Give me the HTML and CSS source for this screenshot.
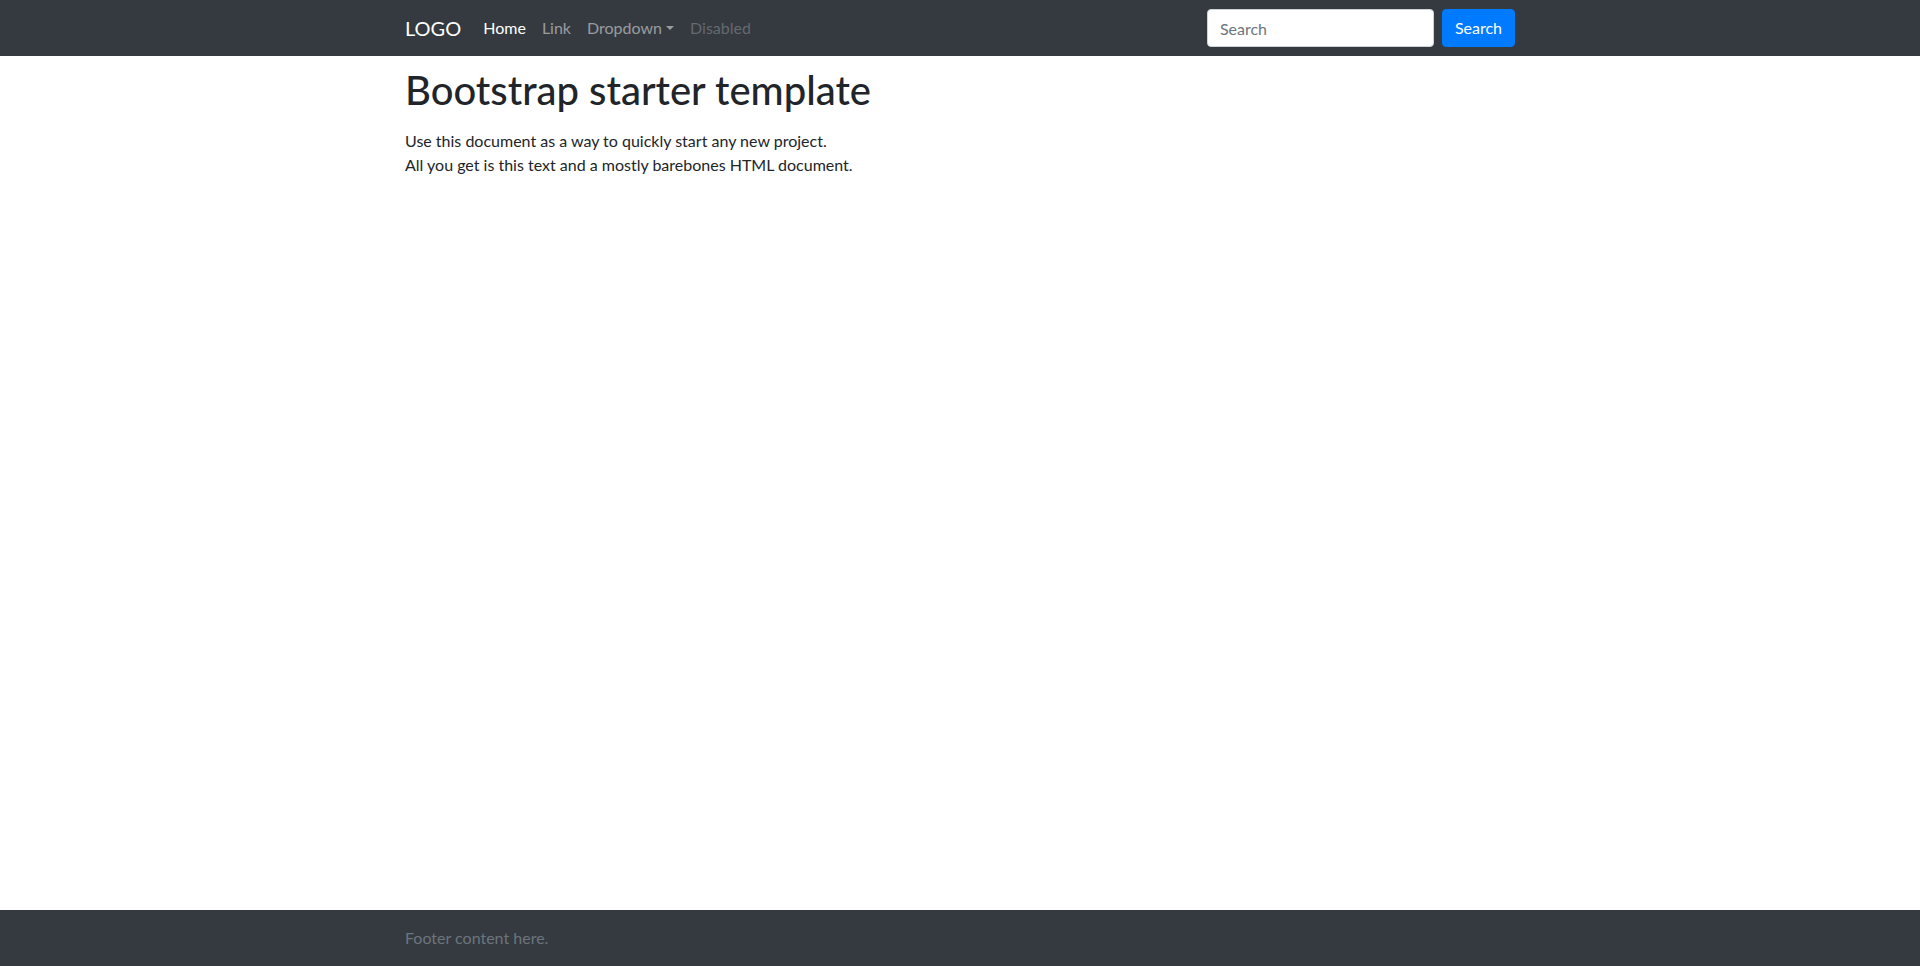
FILE: index.html
```html
<!DOCTYPE html>
<html lang="en">
<head>
<meta charset="utf-8">
<title>Bootstrap starter template</title>
<link rel="stylesheet" href="styles.css">
</head>
<body>
<nav class="navbar">
  <div class="container nav-inner">
    <a class="brand" href="#">LOGO</a>
    <ul class="nav">
      <li><a class="nav-link active" href="#">Home</a></li>
      <li><a class="nav-link" href="#">Link</a></li>
      <li><a class="nav-link dropdown" href="#">Dropdown</a></li>
      <li><a class="nav-link disabled" href="#">Disabled</a></li>
    </ul>
    <form class="search">
      <input class="search-input" type="text" placeholder="Search">
      <button class="search-btn" type="button">Search</button>
    </form>
  </div>
</nav>
<main class="container main">
  <h1 class="title">Bootstrap starter template</h1>
  <p class="text">Use this document as a way to quickly start any new project.<br>All you get is this text and a mostly barebones HTML document.</p>
</main>
<footer class="footer">
  <div class="container">
    <span class="footer-text">Footer content here.</span>
  </div>
</footer>
</body>
</html>
```
FILE: styles.css
```css
* { box-sizing: border-box; }
html, body { height: 100%; }
body {
  margin: 0;
  font-family: Lato, "Noto Sans", sans-serif;
  font-size: 16px;
  line-height: 24px;
  color: #212529;
  background: #fff;
  display: flex;
  flex-direction: column;
  min-height: 100vh;
}
.container {
  width: 1140px;
  margin: 0 auto;
  padding: 0 15px;
}
.navbar {
  background: #343a40;
  height: 56px;
}
.nav-inner {
  display: flex;
  align-items: center;
  height: 56px;
}
.brand {
  color: #fff;
  font-size: 20px;
  line-height: 30px;
  padding: 5px 0;
  margin-right: 14px;
  text-decoration: none;
}
.nav {
  display: flex;
  list-style: none;
  margin: 0;
  padding: 0;
  flex: 1;
}
.nav-link {
  display: block;
  padding: 8px;
  color: rgba(255,255,255,.5);
  text-decoration: none;
}
.nav-link.active { color: #fff; }
.nav-link.disabled { color: rgba(255,255,255,.25); }
.dropdown::after {
  content: "";
  display: inline-block;
  margin-left: .255em;
  vertical-align: .255em;
  border-top: .3em solid;
  border-right: .3em solid transparent;
  border-left: .3em solid transparent;
}
.search {
  display: flex;
  align-items: center;
}
.search-input {
  width: 227px;
  height: 38px;
  padding: 6px 12px;
  font: inherit;
  color: #495057;
  border: 1px solid #ced4da;
  border-radius: 4px;
  margin-right: 8px;
  background: #fff;
}
.search-input::placeholder { color: #6c757d; }
.search-btn {
  height: 38px;
  padding: 6px 12px;
  font: inherit;
  color: #fff;
  background: #007bff;
  border: 1px solid #007bff;
  border-radius: 4px;
}
.main { flex: 1; }
.title {
  font-size: 40px;
  font-weight: 500;
  line-height: 48px;
  margin: 10px 0 15px;
}
.text { margin: 0; }
.footer {
  background: #343a40;
  padding: 16px 0;
}
.footer-text { color: #6c757d; }
```
